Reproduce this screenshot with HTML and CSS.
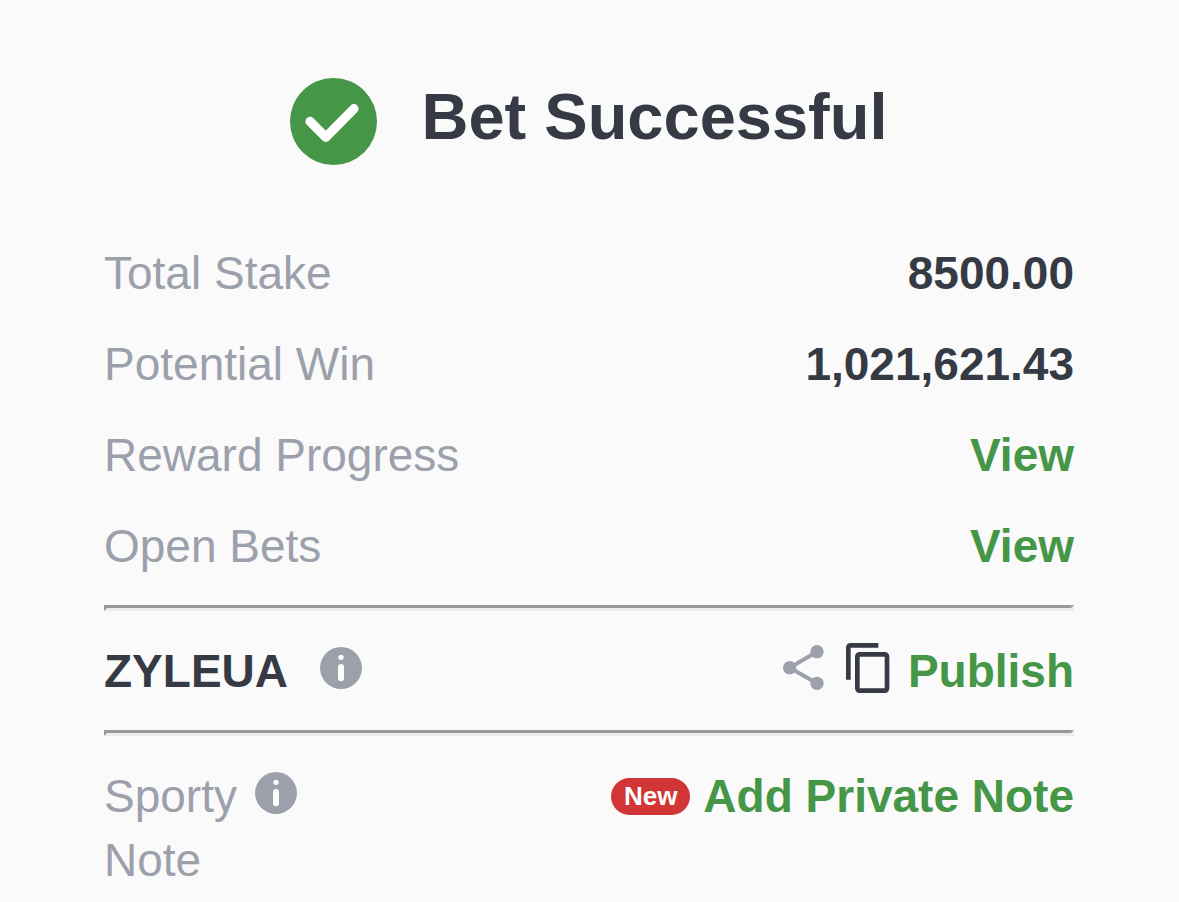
FILE: index.html
```html
<!DOCTYPE html>
<html lang="en">
<head>
    <meta charset="UTF-8">
    <meta name="viewport" content="width=device-width, initial-scale=1.0">
    <title>Bet Successful</title>
    <link rel="stylesheet" href="styles.css">
</head>
<body>
    <main class="bet-slip">
        <div class="header">
            <svg class="check-icon" viewBox="0 0 260 260" aria-hidden="true">
                <circle cx="130" cy="130" r="130" fill="#459647"/>
                <path d="M60 130 L107 177 L191 92" fill="none" stroke="#fff" stroke-width="28" stroke-linecap="round" stroke-linejoin="round"/>
            </svg>
            <h1>Bet Successful</h1>
        </div>

        <div class="details">
            <div class="row">
                <span class="label">Total Stake</span>
                <span class="value">8500.00</span>
            </div>
            <div class="row">
                <span class="label">Potential Win</span>
                <span class="value">1,021,621.43</span>
            </div>
            <div class="row">
                <span class="label">Reward Progress</span>
                <a class="link" href="#rewards">View</a>
            </div>
            <div class="row">
                <span class="label">Open Bets</span>
                <a class="link" href="#bets">View</a>
            </div>
        </div>

        <hr>

        <div class="row">
            <div class="code">
                <span class="value">ZYLEUA</span>
                <button class="icon-btn" type="button" aria-label="About booking code">
                    <svg class="info-icon" viewBox="0 0 126 126" aria-hidden="true">
                        <circle cx="63" cy="63" r="63" fill="#9ca0ab"/>
                        <circle cx="63" cy="31" r="8" fill="#fff"/>
                        <path d="M63 60 V94" stroke="#fff" stroke-width="18" stroke-linecap="round"/>
                    </svg>
                </button>
            </div>
            <div class="actions">
                <div class="share-tools">
                    <button class="icon-btn" type="button" aria-label="Share">
                        <svg class="share-icon" viewBox="0 0 123 135" aria-hidden="true">
                            <path d="M102 20 L20 68 L102 115" fill="none" stroke="#9ca0ab" stroke-width="12"/>
                            <circle cx="20" cy="68" r="20" fill="#9ca0ab"/>
                            <circle cx="102" cy="20" r="20" fill="#9ca0ab"/>
                            <circle cx="102" cy="115" r="20" fill="#9ca0ab"/>
                        </svg>
                    </button>
                    <button class="icon-btn" type="button" aria-label="Copy">
                        <svg class="copy-icon" viewBox="0 0 132 150" aria-hidden="true">
                            <path d="M7 110 V15 Q7 7 15 7 H97" fill="none" stroke="#353a45" stroke-width="14"/>
                            <rect x="34" y="34" width="89" height="109" rx="7" fill="none" stroke="#353a45" stroke-width="14"/>
                        </svg>
                    </button>
                </div>
                <button class="link" type="button">Publish</button>
            </div>
        </div>

        <hr>

        <div class="row">
            <div class="note">
                <span class="label note-label">Sporty Note</span>
                <button class="icon-btn" type="button" aria-label="About Sporty Note">
                    <svg class="info-icon" viewBox="0 0 126 126" aria-hidden="true">
                        <circle cx="63" cy="63" r="63" fill="#9ca0ab"/>
                        <circle cx="63" cy="31" r="8" fill="#fff"/>
                        <path d="M63 60 V94" stroke="#fff" stroke-width="18" stroke-linecap="round"/>
                    </svg>
                </button>
            </div>
            <div class="add-note">
                <span class="badge">New</span>
                <button class="link" type="button">Add Private Note</button>
            </div>
        </div>
    </main>
</body>
</html>
```
FILE: styles.css
```css
body {
    margin: 0;
    font-family: "Liberation Sans", Arial, sans-serif;
    font-size: 46px;
    line-height: 64px;
    color: #353a45;
    background-color: #fafafa;
}
.bet-slip {
    padding: 78px 105px 0 104px;
}
.header {
    display: flex;
    justify-content: center;
    align-items: flex-start;
    gap: 44px;
    margin-bottom: 76px;
}
.header h1 {
    margin: 0;
    font-size: 65px;
    line-height: 78px;
}
.check-icon {
    width: 87px;
    height: 87px;
}
.details {
    display: flex;
    flex-direction: column;
    gap: 27px;
}
.row {
    display: flex;
    justify-content: space-between;
    align-items: flex-start;
}
.label {
    color: #9ca0ab;
}
.value {
    font-weight: bold;
}
.link {
    padding: 0;
    border: none;
    background: none;
    font: inherit;
    font-weight: bold;
    color: #459647;
    text-decoration: none;
    cursor: pointer;
}
.icon-btn {
    display: flex;
    align-items: center;
    height: 57px;
    padding: 0;
    border: none;
    background: none;
    cursor: pointer;
}
hr {
    margin: 27px 0 28px;
    border: 3px solid;
    border-color: #99999b #ececee #ececee #99999b;
}
.code {
    display: flex;
    gap: 32px;
}
.actions {
    display: flex;
    gap: 18px;
}
.share-tools {
    display: flex;
    gap: 22px;
}
.note {
    display: flex;
    gap: 18px;
}
.note-label {
    width: min-content;
}
.add-note {
    display: flex;
    align-items: center;
    gap: 13px;
}
.badge {
    padding: 0 13px;
    border-radius: 19px;
    font-size: 26px;
    font-weight: bold;
    line-height: 37px;
    color: #fff;
    background-color: #d23535;
}
.info-icon {
    width: 42px;
    height: 42px;
}
.share-icon {
    width: 41px;
    height: 45px;
}
.copy-icon {
    width: 44px;
    height: 50px;
}
```
